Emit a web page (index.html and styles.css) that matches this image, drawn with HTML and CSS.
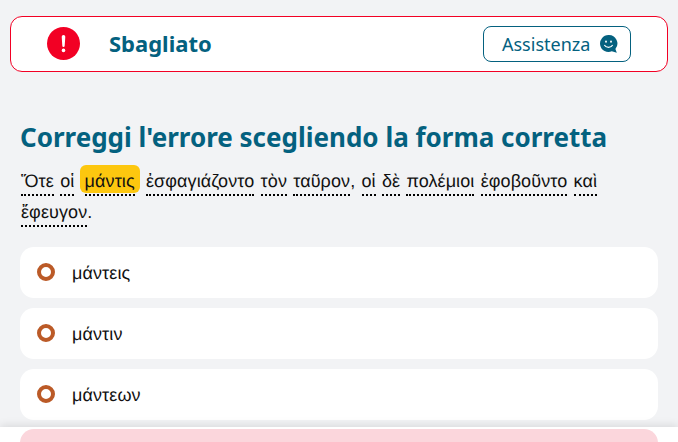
FILE: index.html
```html
<!DOCTYPE html>
<html lang="it">
<head>
<meta charset="utf-8">
<title>Sbagliato</title>
<link rel="stylesheet" href="styles.css">
</head>
<body>
<header class="status">
  <div class="status-left">
    <svg class="alert" viewBox="0 0 33 33" width="33" height="33" aria-hidden="true">
      <circle cx="16.5" cy="16.5" r="16.5" fill="#f20024"/>
      <path d="M14.7 9.7a1.8 1.8 0 0 1 3.6 0l-.6 9.1a1.100 1.100 0 0 1-2.400 0z" fill="#fff"/>
      <circle cx="16.5" cy="23.4" r="1.8" fill="#fff"/>
    </svg>
    <span class="status-title">Sbagliato</span>
  </div>
  <button class="help">Assistenza
    <svg class="help-icon" viewBox="0 0 20 20" width="20" height="20" aria-hidden="true">
      <path d="M9.5 1a8.5 8.5 0 1 0 3.3 16.350L17.800 18.800l-1.400-3.900A8.500 8.500 0 0 0 9.500 1z" fill="#04617f"/>
      <ellipse cx="7" cy="7.600" rx=".9" ry="1.200" fill="#fff"/>
      <ellipse cx="12" cy="7.600" rx=".9" ry="1.200" fill="#fff"/>
      <path d="M5.300 11c1 1.700 2.600 2.400 4.200 2.400s3.200-.7 4.200-2.400" fill="none" stroke="#fff" stroke-width="1.100"/>
    </svg>
  </button>
</header>
<main class="exercise">
  <h1 class="title">Correggi l'errore scegliendo la forma corretta</h1>
  <p class="sentence">
    <span class="word">Ὅτε</span> <span class="word">οἱ</span> <span class="mark"><span class="word">μάντις</span></span> <span class="word">ἐσφαγιάζοντο</span> <span class="word">τὸν</span> <span class="word">ταῦρον</span>, <span class="word">οἱ</span> <span class="word">δὲ</span> <span class="word">πολέμιοι</span> <span class="word">ἐφοβοῦντο</span> <span class="word">καὶ</span> <span class="word">ἔφευγον</span>.
  </p>
  <ul class="options">
    <li class="option"><span class="radio"></span><span class="option-text">μάντεις</span></li>
    <li class="option"><span class="radio"></span><span class="option-text">μάντιν</span></li>
    <li class="option"><span class="radio"></span><span class="option-text">μάντεων</span></li>
  </ul>
</main>
<footer class="dock"><div class="wrong"></div></footer>
</body>
</html>
```
FILE: styles.css
```css
* { box-sizing: border-box; }
html, body { margin: 0; height: 442px; overflow: hidden; }
body { background: #f2f3f5; font-family: "Noto Sans", sans-serif; position: relative; padding: 16px 10px 0; }
.status { height: 56px; background: #fff; border: 1px solid #f20024; border-radius: 12px; display: flex; align-items: center; justify-content: space-between; padding: 0 36px 0 36px; }
.status-left { display: flex; align-items: center; gap: 29px; }
.alert { margin-top: -1px; }
.status-title { font-size: 22px; font-weight: 700; color: #04617f; margin-top: -2px; }
.help { width: 148px; height: 36px; background: #fff; border: 1px solid #04617f; border-radius: 8px; color: #04617f; font: 18px "Noto Sans", sans-serif; display: flex; align-items: center; justify-content: space-between; padding: 0 11px 0 18px; }
.exercise { padding: 0 10px; }
.title { margin: 46px 0 0; font-size: 26px; line-height: 38px; font-weight: 700; color: #04617f; white-space: nowrap; }
.sentence { margin: 10px 0 0; height: 63px; font-family: "Liberation Sans", sans-serif; font-size: 18px; letter-spacing: .1px; text-rendering: geometricPrecision; line-height: 31px; color: #111; word-spacing: 1.1px; padding-left: 1px; }
.word { border-bottom: 2px dotted #000; padding-bottom: 3px; }
.mark { background: #fdc70f; border-radius: 6px; padding: 6px 5px 2px; margin-left: -1px; }
.options { list-style: none; margin: 18px 0 0; padding: 0; display: flex; flex-direction: column; gap: 10px; }
.option { height: 51px; background: #fff; border-radius: 14px; display: flex; align-items: center; font-family: "Liberation Sans", sans-serif; font-size: 18px; letter-spacing: .1px; text-rendering: geometricPrecision; color: #111; padding-left: 17px; gap: 17px; }
.option-text { margin-top: 1px; }
.radio { width: 18px; height: 18px; border: 4px solid #bb5a27; border-radius: 50%; background: #fff; margin-top: -2px; }
.dock { position: absolute; left: 0; right: 0; bottom: 0; height: 15px; background: #fff; box-shadow: 0 -2px 8px rgba(0,0,0,.1); padding: 2px 20px 0; overflow: hidden; }
.wrong { height: 40px; background: #fbd6dc; border-radius: 14px; }
```
